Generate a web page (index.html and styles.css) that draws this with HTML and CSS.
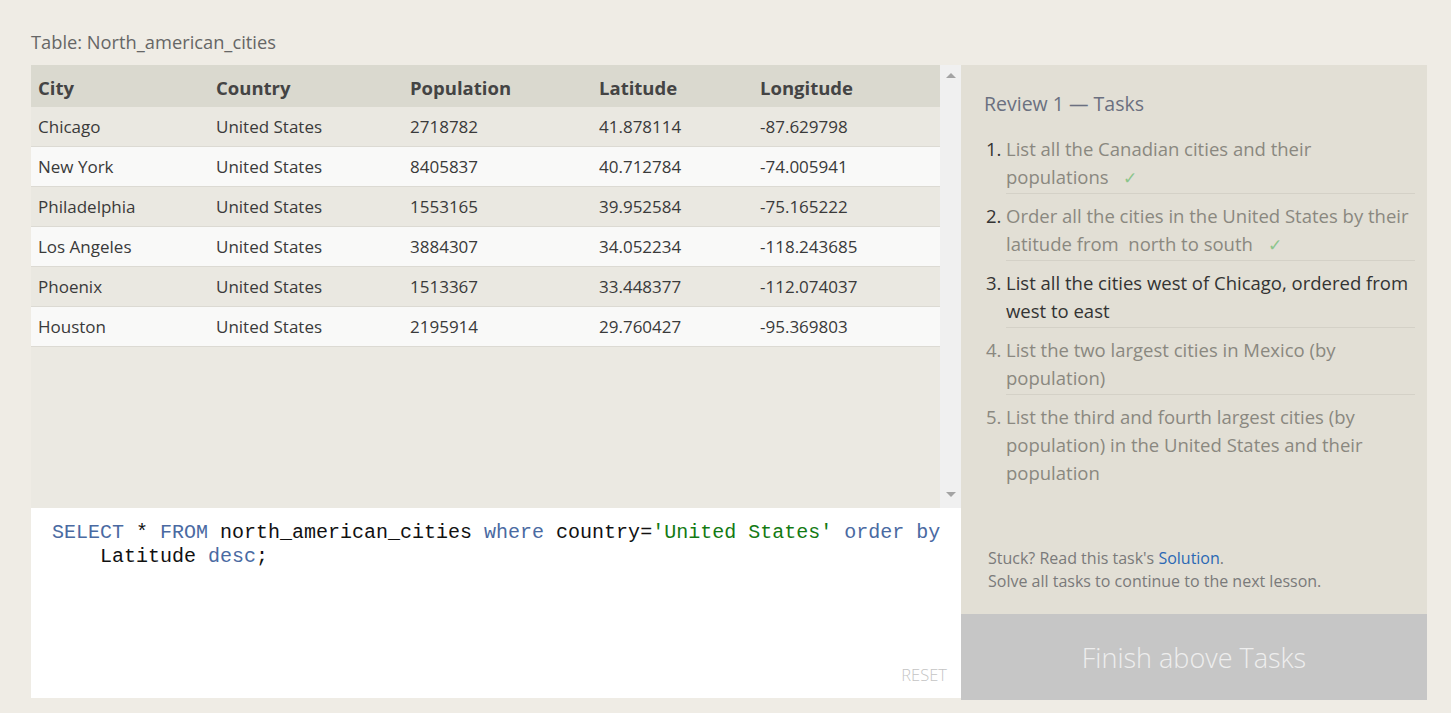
FILE: index.html
```html
<!DOCTYPE html>
<html>
<head>
<meta charset="utf-8">
<link rel="stylesheet" href="styles.css">
</head>
<body>
<div class="page">
  <div class="title">Table: North_american_cities</div>
  <div class="main">
    <div class="left">
      <div class="table-wrap">
        <div class="table-area">
          <table class="data">
            <colgroup>
              <col class="c1"><col class="c2"><col class="c3"><col class="c4"><col class="c5">
            </colgroup>
            <thead>
              <tr><th>City</th><th>Country</th><th>Population</th><th>Latitude</th><th>Longitude</th></tr>
            </thead>
            <tbody>
              <tr><td>Chicago</td><td>United States</td><td>2718782</td><td>41.878114</td><td>-87.629798</td></tr>
              <tr><td>New York</td><td>United States</td><td>8405837</td><td>40.712784</td><td>-74.005941</td></tr>
              <tr><td>Philadelphia</td><td>United States</td><td>1553165</td><td>39.952584</td><td>-75.165222</td></tr>
              <tr><td>Los Angeles</td><td>United States</td><td>3884307</td><td>34.052234</td><td>-118.243685</td></tr>
              <tr><td>Phoenix</td><td>United States</td><td>1513367</td><td>33.448377</td><td>-112.074037</td></tr>
              <tr><td>Houston</td><td>United States</td><td>2195914</td><td>29.760427</td><td>-95.369803</td></tr>
            </tbody>
          </table>
        </div>
        <div class="scrollbar">
          <div class="arrow up"></div>
          <div class="arrow down"></div>
        </div>
      </div>
      <div class="editor">
        <div class="code"><span class="kw">SELECT</span> * <span class="kw">FROM</span> north_american_cities <span class="kw">where</span> country=<span class="str">'United States'</span> <span class="kw">order by</span></div>
        <div class="code indent">Latitude <span class="kw">desc</span>;</div>
        <div class="reset">RESET</div>
      </div>
    </div>
    <div class="right">
      <div class="tasks">
        <div class="tasks-title">Review 1 — Tasks</div>
        <ol class="task-list">
          <li class="task done"><span class="num">1.</span><span class="txt">List all the Canadian cities and their populations <span class="check">✓</span></span></li>
          <li class="task done"><span class="num">2.</span><span class="txt">Order all the cities in the United States by their latitude from&nbsp; north to south <span class="check">✓</span></span></li>
          <li class="task current"><span class="num">3.</span><span class="txt">List all the cities west of Chicago, ordered from west to east</span></li>
          <li class="task todo"><span class="num">4.</span><span class="txt">List the two largest cities in Mexico (by population)</span></li>
          <li class="task todo last"><span class="num">5.</span><span class="txt">List the third and fourth largest cities (by population) in the United States and their population</span></li>
        </ol>
        <div class="footer">
          <div>Stuck? Read this task's <span class="link">Solution</span>.</div>
          <div>Solve all tasks to continue to the next lesson.</div>
        </div>
      </div>
      <div class="finish">Finish above Tasks</div>
    </div>
  </div>
</div>
</body>
</html>
```
FILE: styles.css
```css
html, body {
  margin: 0;
  padding: 0;
}
body {
  background: #efece5;
  font-family: "Open Sans", "Noto Sans", sans-serif;
  color: #333;
  width: 1451px;
  height: 713px;
  overflow: hidden;
}
.page {
  padding-left: 31px;
}
.title {
  padding-top: 30px;
  height: 35px;
  line-height: 24px;
  font-size: 18.3px;
  color: #666;
}
.main {
  display: flex;
  height: 635px;
}
.left {
  width: 930px;
  display: flex;
  flex-direction: column;
}
.table-wrap {
  height: 443px;
  display: flex;
}
.table-area {
  flex: 1;
  background: #ebe9e2;
}
.data {
  width: 100%;
  border-collapse: collapse;
  table-layout: fixed;
}
.c1 { width: 178px; }
.c2 { width: 194px; }
.c3 { width: 189px; }
.c4 { width: 161px; }
.data th {
  height: 42px;
  box-sizing: border-box;
  background: #dad9cf;
  text-align: left;
  font-weight: 700;
  font-size: 18.5px;
  color: #444;
  padding: 3px 0 0 7px;
}
.data td {
  height: 39px;
  padding: 0 0 0 7px;
  font-size: 17px;
  font-weight: 400;
  color: #3a3a3a;
  border-bottom: 1px solid #dcdad3;
  white-space: nowrap;
}
.data tbody tr:nth-child(odd) td { background: #eae8e1; }
.data tbody tr:nth-child(even) td { background: #f9f9f8; }
.scrollbar {
  width: 21px;
  background: #f0f0f0;
  display: flex;
  flex-direction: column;
  justify-content: space-between;
  align-items: center;
  padding: 8px 0;
  box-sizing: border-box;
}
.arrow {
  width: 0;
  height: 0;
  border-left: 5px solid transparent;
  border-right: 5px solid transparent;
}
.arrow.up { border-bottom: 5px solid #a3a3a3; }
.arrow.down { border-top: 5px solid #a3a3a3; margin-bottom: 3px; }
.editor {
  flex: 1;
  background: #fff;
  padding: 13px 0 0 21px;
  margin-bottom: 2px;
  position: relative;
}
.code {
  font-family: "Liberation Mono", "DejaVu Sans Mono", monospace;
  font-size: 20px;
  line-height: 24px;
  white-space: pre;
  color: #111;
}
.code.indent { padding-left: 48px; }
.kw { color: #4a6aa2; }
.str { color: #137a13; }
.reset {
  position: absolute;
  right: 14px;
  bottom: 12px;
  font-size: 16.5px;
  font-weight: 300;
  color: #c4c4c4;
}
.right {
  width: 466px;
  display: flex;
  flex-direction: column;
  background: #e2dfd5;
}
.tasks {
  flex: 1;
  display: flex;
  flex-direction: column;
  padding: 25px 12px 0 23px;
}
.tasks-title {
  font-size: 19.5px;
  line-height: 28px;
  color: #6b7080;
}
.task-list {
  list-style: none;
  margin: 9px 0 0 2px;
  padding: 0;
}
.task {
  display: flex;
  padding: 8px 0 0 0;
  font-size: 18.5px;
  line-height: 28px;
  color: #8a8880;
}
.task .txt {
  flex: 1;
  border-bottom: 1px solid #d4d1c7;
  padding-bottom: 2px;
}
.task.last .txt { border-bottom: none; }
.task .num {
  width: 20px;
  color: #333;
}
.task.current { color: #333; }
.task.todo .num { color: #8a8880; }
.check {
  display: inline-block;
  color: #8cc58c;
  margin-left: 10px;
  font-size: 17px;
  line-height: 20px;
}
.footer {
  margin-top: auto;
  padding: 0 0 21px 4px;
  font-size: 16px;
  line-height: 23px;
  color: #7a7a7a;
}
.link { color: #2a68b4; }
.finish {
  height: 86px;
  background: #c6c6c6;
  color: #eeeeee;
  font-size: 27px;
  font-weight: 300;
  display: flex;
  align-items: center;
  justify-content: center;
}
```
